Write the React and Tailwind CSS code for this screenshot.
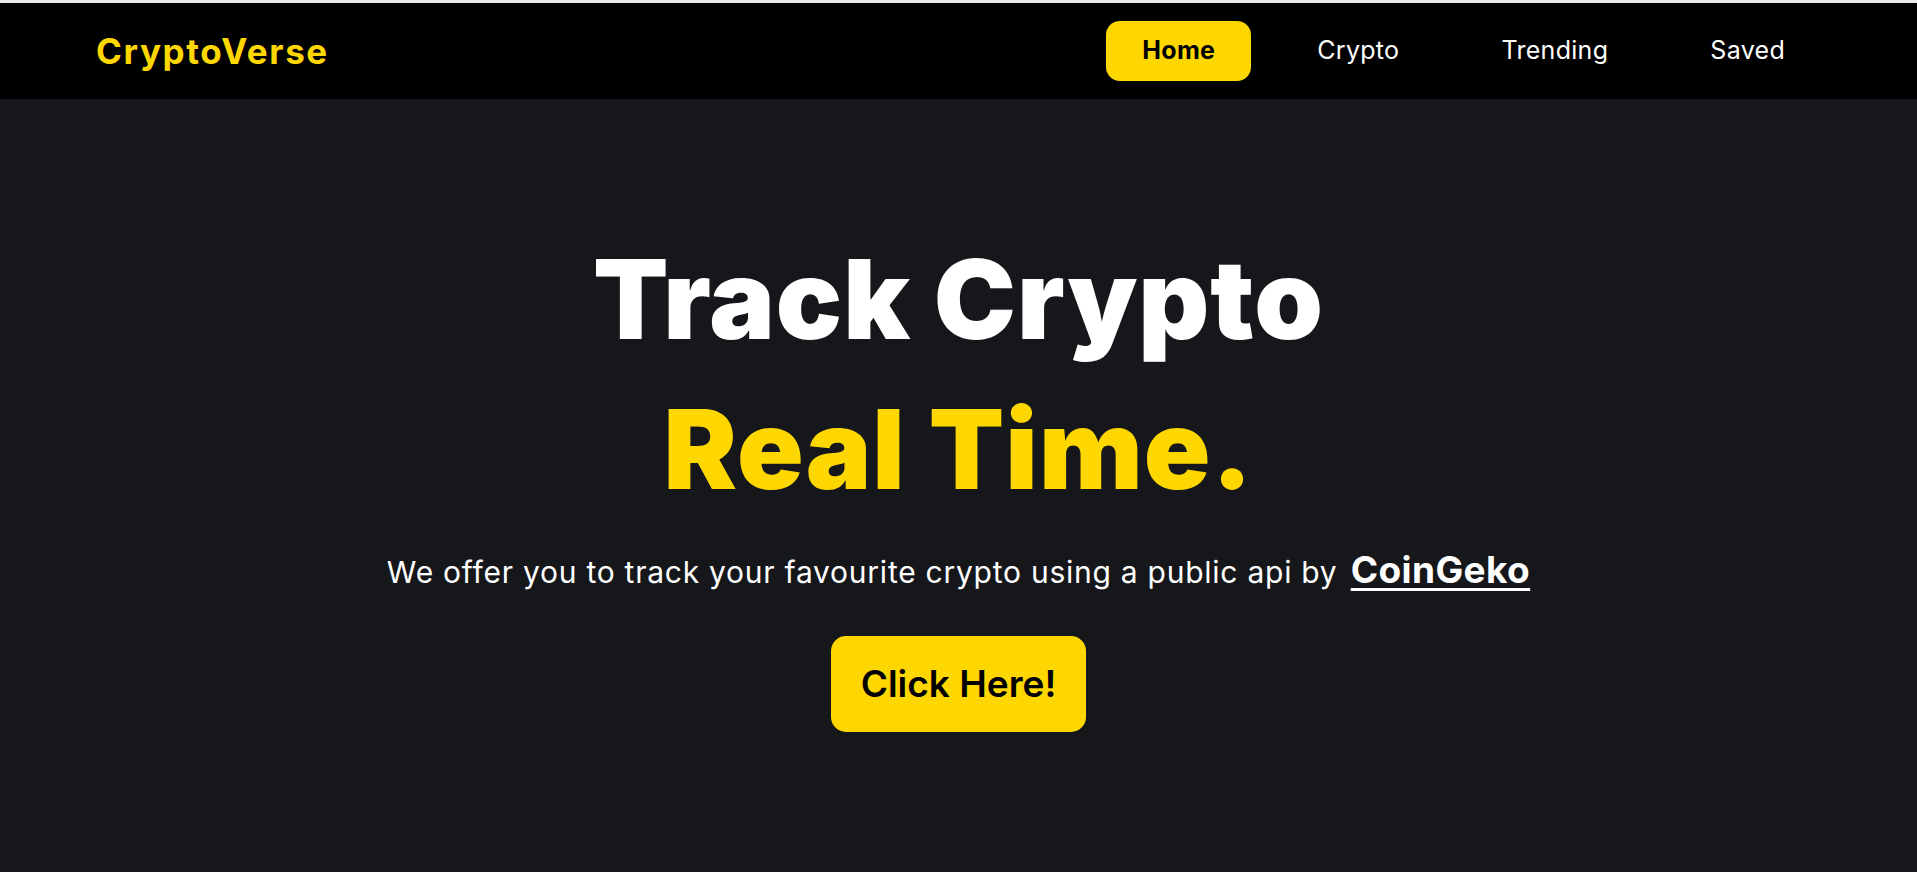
const links = ['Home', 'Crypto', 'Trending', 'Saved'];

const Navbar = () => {
  return (
    <nav className="h-[96px] bg-black flex items-center justify-between px-24">
      <h1 className="text-[35px] font-bold text-[#ffd700] tracking-[1.6px]">CryptoVerse</h1>
      <ul className="flex items-center gap-[30px]">
        {links.map((l, i) => (
          <li key={l}>
            <a
              href="#"
              className={
                i === 0
                  ? 'flex items-center h-[60px] px-9 rounded-[14px] bg-[#ffd700] text-black font-bold text-[25px] tracking-[0.3px]'
                  : 'flex items-center h-[60px] px-9 text-white text-[25px] tracking-[0.3px]'
              }
            >
              {l}
            </a>
          </li>
        ))}
      </ul>
    </nav>
  );
};

const Hero = () => {
  return (
    <section className="flex flex-col items-center pt-[125px] min-h-[773px] bg-[#16171a] text-center">
      <h2 className="font-black text-[110px] leading-[150px] tracking-[1px]">
        <span className="block text-white">Track Crypto</span>
        <span className="block text-[#ffd700]">Real Time.</span>
      </h2>
      <p className="mt-[26px] text-white text-[30px] leading-[40px] tracking-[0.75px]">
        We offer you to track your favourite crypto using a public api by{' '}
        <a href="#" className="ml-1 font-bold text-[37px] tracking-[0.4px] underline decoration-[3px] underline-offset-[5px]">
          CoinGeko
        </a>
      </p>
      <button className="mt-[44px] h-[96px] w-[255px] rounded-[15px] bg-[#ffd700] text-black text-[37px] font-semibold">
        Click Here!
      </button>
    </section>
  );
};

const App = () => {
  return (
    <div className="font-['Inter',sans-serif]">
      <div className="h-[3px] bg-[#e9e9ef]" />
      <Navbar />
      <Hero />
    </div>
  );
};

export default App;
